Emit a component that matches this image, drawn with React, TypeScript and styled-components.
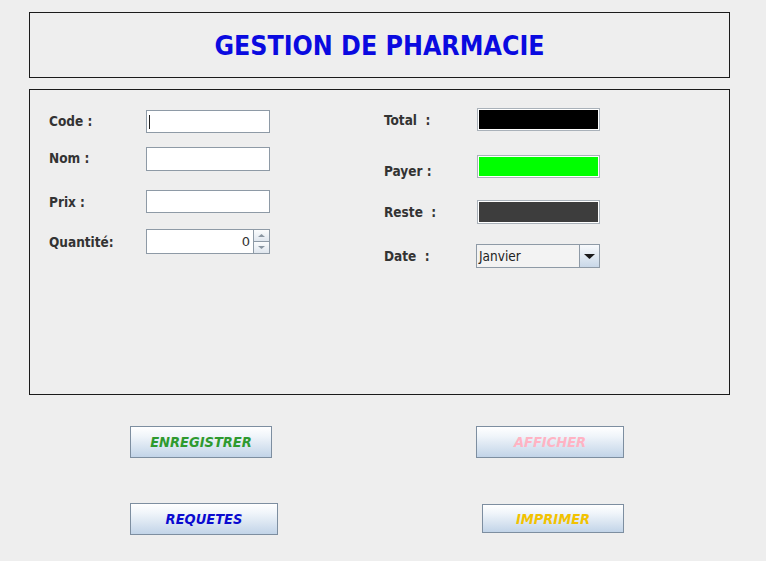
import React from "react";
import styled, { createGlobalStyle } from "styled-components";

const GlobalStyle = createGlobalStyle`
  html, body { margin: 0; padding: 0; background: #eeeeee; }
  body { font-family: "DejaVu Sans", Tahoma, Verdana, sans-serif; }
  * { box-sizing: border-box; }
`;

const Frame = styled.div`
  width: 766px;
  height: 561px;
  padding: 12px 0 0 29px;
  background: #eeeeee;
  overflow: hidden;
`;

const Header = styled.div`
  width: 701px;
  height: 66px;
  border: 1px solid #1a1a1a;
  display: flex;
  align-items: center;
  justify-content: center;
`;

const Title = styled.h1`
  margin: 0;
  font-family: "DejaVu Sans Condensed", "DejaVu Sans", sans-serif;
  font-weight: bold;
  font-size: 26.5px;
  color: #0a0ae0;
`;

const Panel = styled.div`
  margin-top: 11px;
  width: 701px;
  height: 306px;
  border: 1px solid #1a1a1a;
  display: grid;
  grid-template-columns: 335px 1fr;
  padding-left: 19px;
`;

const Column = styled.div`
  display: flex;
  flex-direction: column;
`;

const Row = styled.div<{ $top: number; $h: number }>`
  display: flex;
  align-items: center;
  margin-top: ${(p) => p.$top}px;
  height: ${(p) => p.$h}px;
`;

const Label = styled.span<{ $w: number; $dy?: number }>`
  width: ${(p) => p.$w}px;
  margin-top: ${(p) => (p.$dy ?? 0) * 2}px;
  font-family: "DejaVu Sans Condensed", "DejaVu Sans", sans-serif;
  font-weight: bold;
  font-size: 13.5px;
  color: #333333;
  white-space: pre;
`;

const TextField = styled.div<{ $w?: number }>`
  position: relative;
  width: ${(p) => p.$w ?? 124}px;
  height: 100%;
  background: #ffffff;
  border: 1px solid #8e9aa6;
  display: flex;
  align-items: center;
  justify-content: flex-end;
  padding-right: 3px;
  font-family: "DejaVu Sans", sans-serif;
  font-size: 13px;
  color: #333;
`;

const Caret = styled.span`
  position: absolute;
  left: 2px;
  top: 4px;
  width: 1px;
  height: 14px;
  background: #222;
`;

const ColorField = styled.div<{ $bg: string; $shift?: number }>`
  width: 123px;
  height: 100%;
  margin-left: ${(p) => p.$shift ?? 0}px;
  background: ${(p) => p.$bg};
  background-clip: padding-box;
  border: 1px solid #a9b1b9;
  box-shadow: inset 0 0 0 1px #ffffff;
`;

const Spinner = styled.div`
  display: flex;
  height: 100%;
`;

const SpinButtons = styled.div`
  width: 16px;
  display: flex;
  flex-direction: column;
  border: 1px solid #8e9aa6;
  border-left: none;
`;

const SpinButton = styled.div<{ $up?: boolean }>`
  flex: 1;
  display: flex;
  align-items: center;
  justify-content: center;
  background: linear-gradient(#fbfcfd, #dfe6ee);
  border-bottom: ${(p) => (p.$up ? "1px solid #8e9aa6" : "none")};
`;

const Combo = styled.div`
  width: 124px;
  height: 100%;
  display: flex;
  border: 1px solid #8e9aa6;
  background: #f3f3f3;
`;

const ComboText = styled.span`
  flex: 1;
  display: flex;
  align-items: center;
  padding-left: 2px;
  font-family: "DejaVu Sans Condensed", "DejaVu Sans", sans-serif;
  font-size: 13.5px;
  color: #222;
`;

const ComboArrow = styled.div`
  width: 20px;
  border-left: 1px solid #8e9aa6;
  background: linear-gradient(#f8fafc, #c9d8e8);
  display: flex;
  align-items: center;
  justify-content: center;
`;

const ButtonRow = styled.div<{ $top: number }>`
  display: flex;
  align-items: flex-start;
  margin-top: ${(p) => p.$top}px;
`;

const ActionButton = styled.button<{ $w: number; $h: number; $color: string; $left: number; $dy?: number }>`
  width: ${(p) => p.$w}px;
  height: ${(p) => p.$h}px;
  margin-left: ${(p) => p.$left}px;
  margin-top: ${(p) => p.$dy ?? 0}px;
  padding: 0;
  border: 1px solid #7d8ea0;
  background: linear-gradient(#ffffff 0%, #f0f5fa 30%, #c2d4e8 100%);
  font-family: "DejaVu Sans Condensed", "DejaVu Sans", sans-serif;
  font-weight: bold;
  font-style: italic;
  font-size: 14.5px;
  color: ${(p) => p.$color};
  cursor: pointer;
`;

const Tri = ({ up, size = 4, color = "#8a96a2" }: { up?: boolean; size?: number; color?: string }) => (
  <svg width={size * 2 + 1} height={size} viewBox={`0 0 ${size * 2 + 1} ${size}`}>
    <polygon
      points={up ? `0,${size} ${size * 2 + 1},${size} ${size + 0.5},0` : `0,0 ${size * 2 + 1},0 ${size + 0.5},${size}`}
      fill={color}
    />
  </svg>
);

export default function App() {
  return (
    <>
      <GlobalStyle />
      <Frame>
        <Header>
          <Title>GESTION DE PHARMACIE</Title>
        </Header>
        <Panel>
          <Column>
            <Row $top={20} $h={23}>
              <Label $w={97} $dy={-1}>Code :</Label>
              <TextField>
                <Caret />
              </TextField>
            </Row>
            <Row $top={14} $h={24}>
              <Label $w={97} $dy={-1}>Nom :</Label>
              <TextField />
            </Row>
            <Row $top={19} $h={23}>
              <Label $w={97}>Prix :</Label>
              <TextField />
            </Row>
            <Row $top={16} $h={25}>
              <Label $w={97}>Quantité:</Label>
              <Spinner>
                <TextField $w={108}>0</TextField>
                <SpinButtons>
                  <SpinButton $up>
                    <Tri up size={3} />
                  </SpinButton>
                  <SpinButton>
                    <Tri size={3} />
                  </SpinButton>
                </SpinButtons>
              </Spinner>
            </Row>
          </Column>
          <Column>
            <Row $top={18} $h={23}>
              <Label $w={92}>Total  :</Label>
              <ColorField $bg="#000000" $shift={1} />
            </Row>
            <Row $top={24} $h={23}>
              <Label $w={92} $dy={4}>Payer :</Label>
              <ColorField $bg="#00ff00" $shift={1} />
            </Row>
            <Row $top={22} $h={24}>
              <Label $w={92}>Reste  :</Label>
              <ColorField $bg="#3d3d3d" $shift={1} />
            </Row>
            <Row $top={20} $h={24}>
              <Label $w={92}>Date  :</Label>
              <Combo>
                <ComboText>Janvier</ComboText>
                <ComboArrow>
                  <Tri size={5} color="#1a1a1a" />
                </ComboArrow>
              </Combo>
            </Row>
          </Column>
        </Panel>
        <ButtonRow $top={31}>
          <ActionButton $w={142} $h={32} $left={101} $color="#2e9a2e">ENREGISTRER</ActionButton>
          <ActionButton $w={148} $h={32} $left={204} $color="#ffb3c3">AFFICHER</ActionButton>
        </ButtonRow>
        <ButtonRow $top={45}>
          <ActionButton $w={148} $h={32} $left={101} $color="#0a0ad0">REQUETES</ActionButton>
          <ActionButton $w={142} $h={29} $left={204} $dy={1} $color="#f2c200">IMPRIMER</ActionButton>
        </ButtonRow>
      </Frame>
    </>
  );
}
